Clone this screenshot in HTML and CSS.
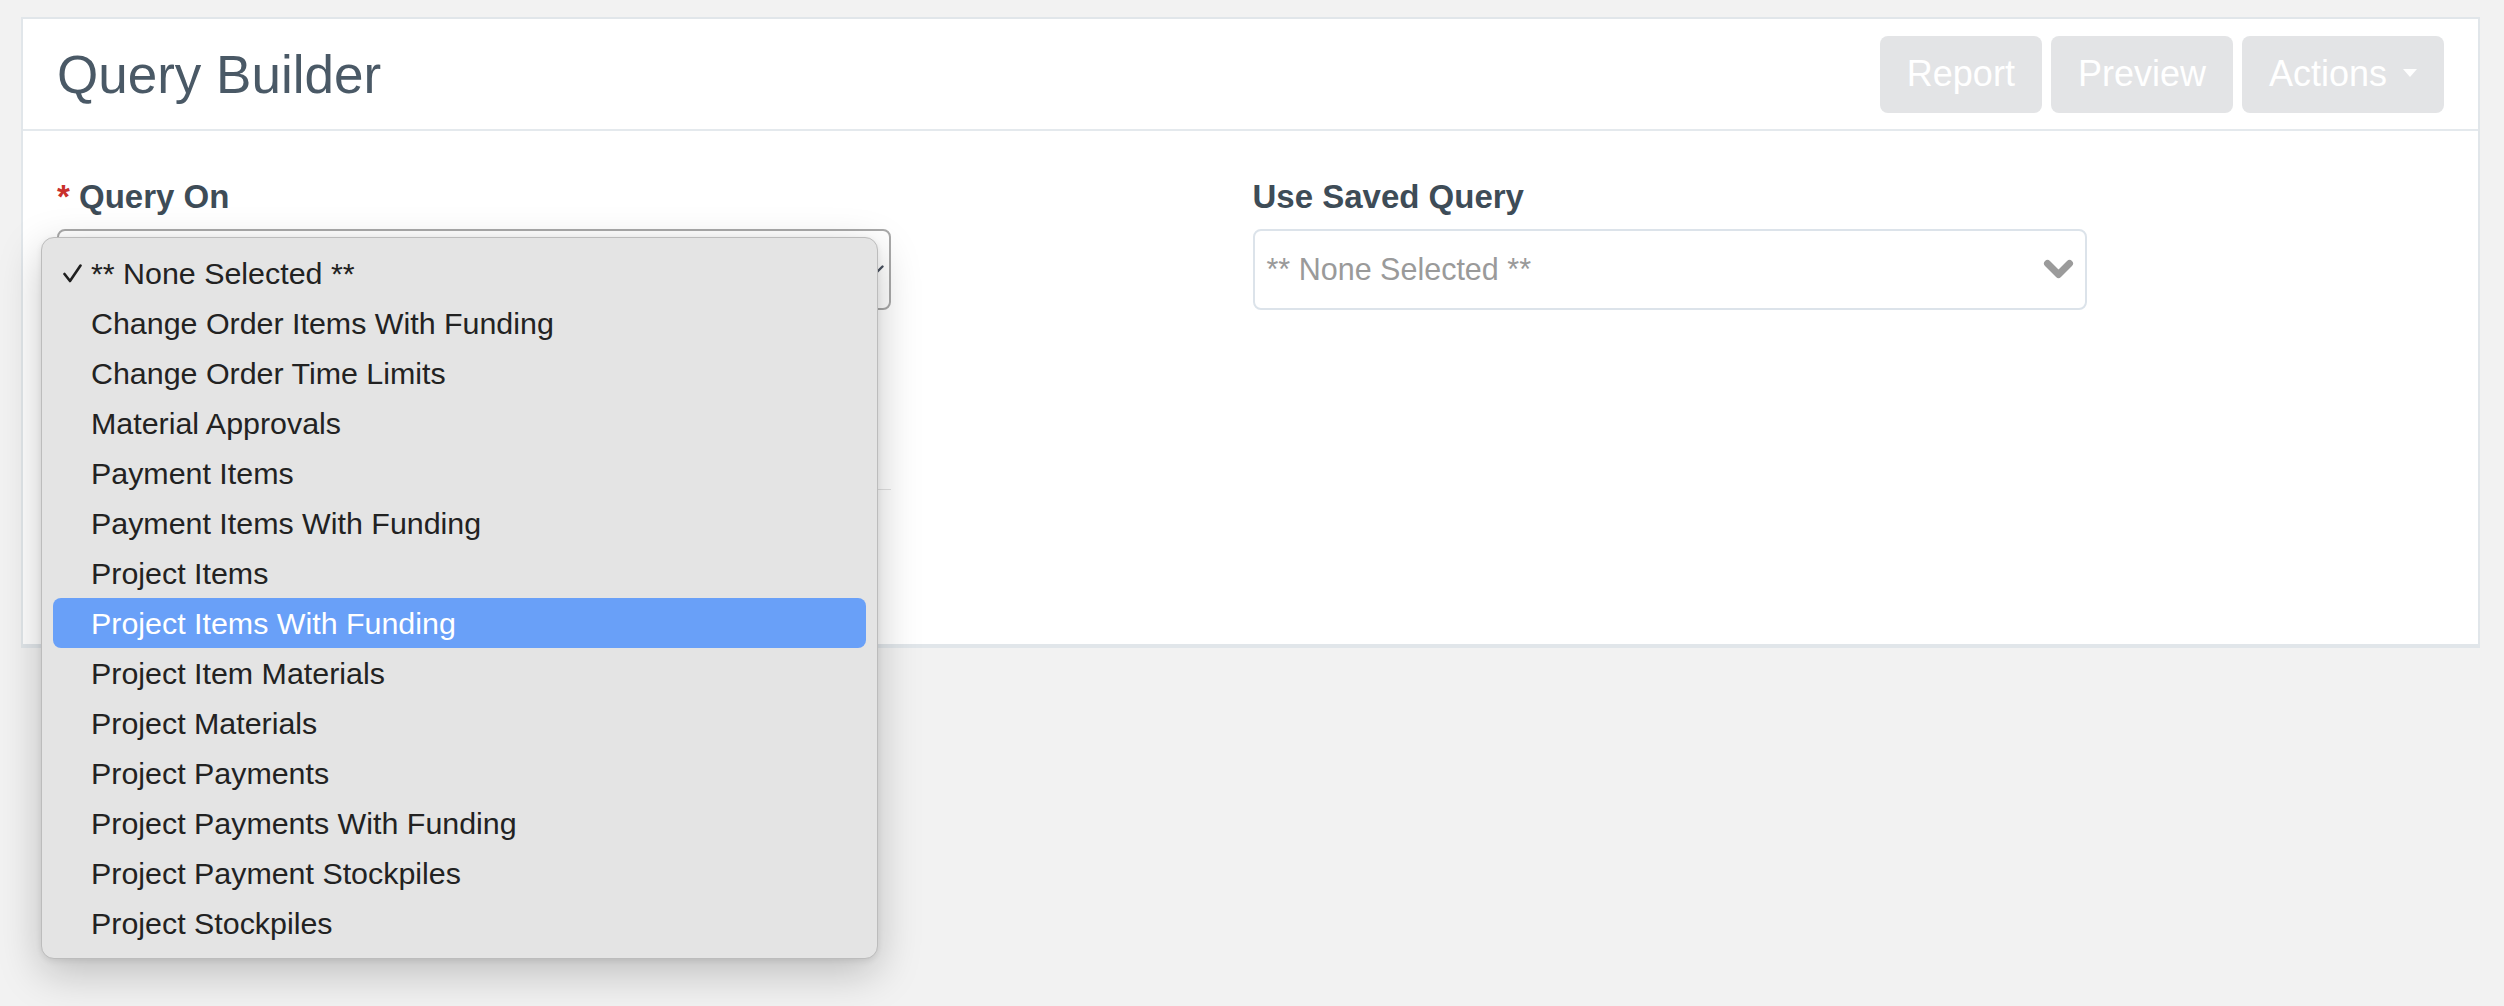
FILE: index.html
```html
<!DOCTYPE html>
<html lang="en">

<head>
  <meta charset="UTF-8">
  <meta name="viewport" content="width=device-width, initial-scale=1.0">
  <title>Query Builder</title>
  <link rel="stylesheet" href="styles.css">
</head>

<body>
  <div class="page">
    <div class="panel">
      <div class="panel-header">
        <h1 class="title">Query Builder</h1>
        <div class="toolbar">
          <button class="btn">Report</button>
          <button class="btn">Preview</button>
          <button class="btn">Actions<span class="caret"></span></button>
        </div>
      </div>

      <div class="panel-body">
        <div class="field">
          <label class="field-label"><span class="required">*</span> Query On</label>
          <div class="select-wrap">
            <div class="select select-native">
              <svg class="chevron-thin" width="16" height="10" viewBox="0 0 16 10">
                <polyline points="1.5,1.5 8,8 14.5,1.5" fill="none" stroke="#4a5260" stroke-width="2.4" stroke-linecap="round" stroke-linejoin="round" />
              </svg>
            </div>

            <ul class="popup">
              <li class="option">
                <span class="check">
                  <svg width="19" height="19" viewBox="0 0 19 19">
                    <polyline points="1.5,10 7,17 17.5,1.5" fill="none" stroke="#1f1f1f" stroke-width="2.6" stroke-linecap="round" stroke-linejoin="round" />
                  </svg>
                </span>** None Selected **
              </li>
              <li class="option"><span class="check"></span>Change Order Items With Funding</li>
              <li class="option"><span class="check"></span>Change Order Time Limits</li>
              <li class="option"><span class="check"></span>Material Approvals</li>
              <li class="option"><span class="check"></span>Payment Items</li>
              <li class="option"><span class="check"></span>Payment Items With Funding</li>
              <li class="option"><span class="check"></span>Project Items</li>
              <li class="option active"><span class="check"></span>Project Items With Funding</li>
              <li class="option"><span class="check"></span>Project Item Materials</li>
              <li class="option"><span class="check"></span>Project Materials</li>
              <li class="option"><span class="check"></span>Project Payments</li>
              <li class="option"><span class="check"></span>Project Payments With Funding</li>
              <li class="option"><span class="check"></span>Project Payment Stockpiles</li>
              <li class="option"><span class="check"></span>Project Stockpiles</li>
            </ul>
          </div>
          <div class="divider"></div>
        </div>

        <div class="field">
          <label class="field-label">Use Saved Query</label>
          <div class="select">
            <span class="placeholder">** None Selected **</span>
            <svg class="chevron" width="31" height="21" viewBox="0 0 31 21">
              <polyline points="4.5,4.5 15.5,15.5 26.5,4.5" fill="none" stroke="#9b9b9b" stroke-width="7" stroke-linecap="round" stroke-linejoin="round" />
            </svg>
          </div>
        </div>
      </div>
    </div>
  </div>
</body>

</html>
```

FILE: styles.css
```css
* {
  margin: 0;
  padding: 0;
  box-sizing: border-box;
  font-family: "Liberation Sans", Arial, Helvetica, sans-serif;
}

html,
body {
  min-height: 100%;
  background: #f2f2f2;
}

.page {
  min-height: 100vh;
  padding: 17px 24px 0 21px;
}

.panel {
  background: #fff;
  border: 2px solid #e1e6ea;
  border-bottom-width: 4px;
}

.panel-header {
  height: 112px;
  padding: 0 34px;
  display: flex;
  align-items: center;
  justify-content: space-between;
  border-bottom: 2px solid #e4e9ed;
}

.title {
  font-size: 53px;
  font-weight: normal;
  color: #4a5966;
}

.toolbar {
  display: flex;
  gap: 9px;
}

.btn {
  height: 77px;
  padding: 0 27px;
  border: 0;
  border-radius: 8px;
  background: #e3e4e6;
  color: #fff;
  font-size: 36px;
  display: flex;
  align-items: center;
}

.caret {
  width: 0;
  height: 0;
  margin-left: 16px;
  margin-top: -3px;
  border-top: 8px solid #fff;
  border-left: 7.5px solid transparent;
  border-right: 7.5px solid transparent;
}

.panel-body {
  display: grid;
  grid-template-columns: 1fr 1fr;
  column-gap: 4px;
  padding: 47px 34px 154px;
}

.field-label {
  display: block;
  font-size: 33px;
  line-height: 38px;
  font-weight: bold;
  color: #3e4c57;
  margin-bottom: 13px;
}

.required {
  color: #c9302c;
}

.select-wrap {
  position: relative;
}

.select {
  width: 834px;
  height: 81px;
  display: flex;
  align-items: center;
  justify-content: space-between;
  padding: 0 11px 0 12px;
  border: 2px solid #dce3ea;
  border-radius: 8px;
  background: #fff;
}

.select-native {
  border-color: #a9a9a9;
  justify-content: flex-end;
  padding-right: 5px;
}

.placeholder {
  font-size: 30.5px;
  color: #9a9a9a;
}

.divider {
  width: 834px;
  margin-top: 179px;
  border-top: 1px solid #e2e2e2;
}

/* native popup menu, drawn open over the form */
.popup {
  position: absolute;
  z-index: 10;
  top: 8px;
  left: -16px;
  width: 837px;
  padding: 10px 11px;
  list-style: none;
  background: #e4e4e4;
  border: 1px solid #bcbcbc;
  border-radius: 13px;
  box-shadow: 0 14px 44px rgba(0, 0, 0, 0.22), 0 2px 6px rgba(0, 0, 0, 0.08);
}

.option {
  display: flex;
  align-items: center;
  height: 50px;
  padding-left: 10px;
  border-radius: 8px;
  font-size: 30.4px;
  color: #222;
}

.option.active {
  background: #69a0f8;
  color: #fff;
}

.check {
  width: 28px;
  display: flex;
  align-items: center;
}
```
